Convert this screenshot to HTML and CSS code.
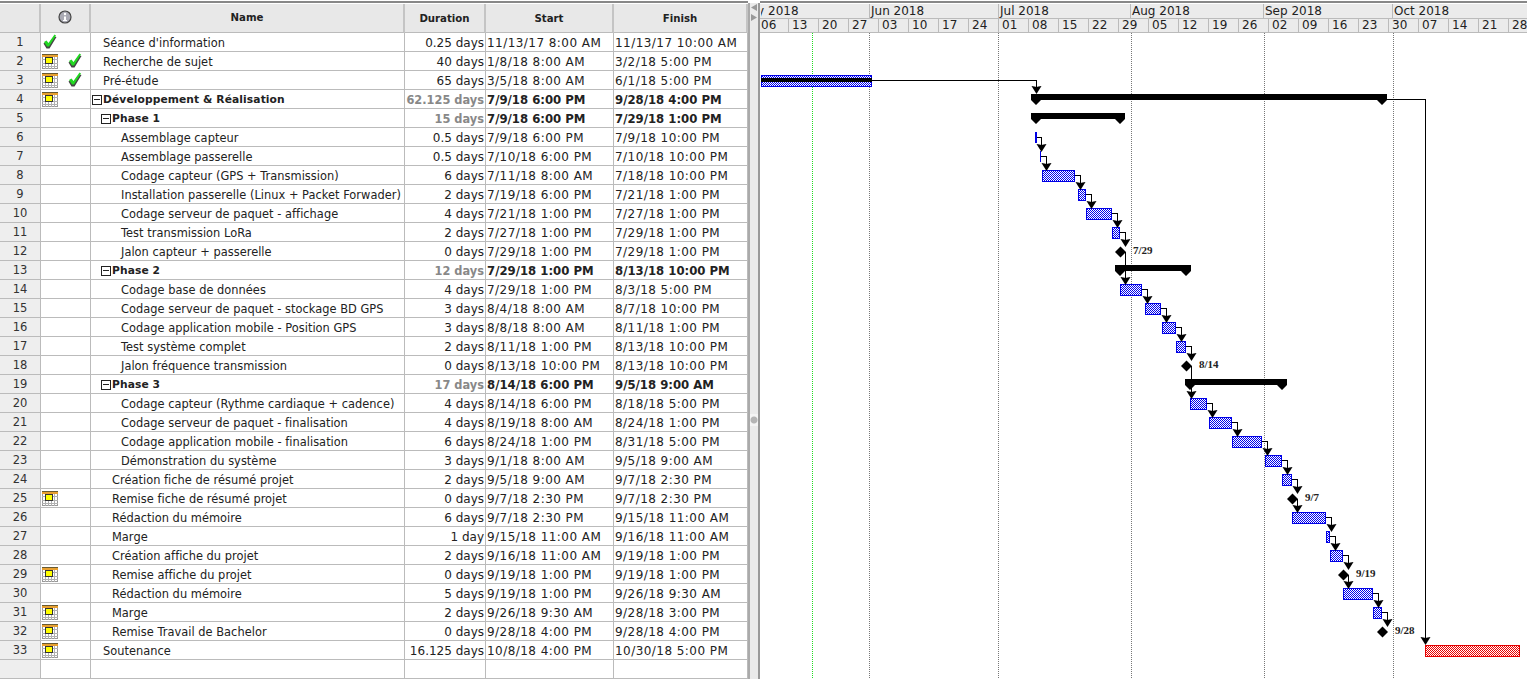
FILE: index.html
```html
<!DOCTYPE html>
<html lang="en">
<head>
<meta charset="utf-8">
<title>Gantt</title>
<link rel="stylesheet" href="styles.css">
</head>
<body>
<svg class="defs" width="0" height="0">
<defs>
<symbol id="cal" viewBox="0 0 16 15"><rect x="0.5" y="0.5" width="15" height="14" fill="#fff" stroke="#999"/><path d="M0 5.5H16M0 9.5H16M0 12.5H16M3.5 0V15M6.5 0V15M9.5 0V15M12.5 0V15" stroke="#b0b0b0" fill="none"/><rect x="0" y="0" width="16" height="1" fill="#6a5a30"/><rect x="0" y="1" width="16" height="2" fill="#e8a030"/><rect x="3.5" y="3.5" width="7" height="6" fill="#ff0" stroke="#333"/></symbol>
<symbol id="chk" viewBox="0 0 14 15"><path d="M0.5 9.5L3 8L5 10.5L11 2.5L13.5 3L6.5 14.5L3.5 14.5Z" fill="#444"/><path d="M1 8L3.5 6.5L5.5 9L11.5 0.5L13 1.5L6 12.5L4 12.5Z" fill="#22d822"/></symbol>
<pattern id="blue" width="2" height="2" patternUnits="userSpaceOnUse"><rect width="2" height="2" fill="#fff"/><rect width="1" height="1" fill="#00e"/><rect x="1" y="1" width="1" height="1" fill="#00e"/></pattern>
<pattern id="red" width="2" height="2" patternUnits="userSpaceOnUse"><rect width="2" height="2" fill="#fff"/><rect width="1" height="1" fill="#e00"/><rect x="1" y="1" width="1" height="1" fill="#e00"/></pattern>
<polygon id="ah" points="0,1 -5,-7 -2,-6.5 0,-6 2,-6.5 5,-7"/>
</defs>
</svg>
<div class="app">
<div class="table">
<div class="row head"><span class="c n"></span><span class="c i"><svg class="info" width="14" height="14" viewBox="0 0 14 14"><circle cx="7" cy="7" r="6" fill="#aaaab4" stroke="#444" stroke-width="1.2"/><circle cx="7" cy="4" r="1.2" fill="#fff"/><path d="M6 6.5H8V10H9V11H5V10H6Z" fill="#fff"/></svg></span><span class="c nm">Name</span><span class="c d">Duration</span><span class="c s">Start</span><span class="c f">Finish</span></div>
<div class="row"><span class="c n">1</span><span class="c i"><svg class="ck1"><use href="#chk"/></svg></span><span class="c nm l0">Séance d'information</span><span class="c d">0.25 days</span><span class="c s">11/13/17 8:00 AM</span><span class="c f">11/13/17 10:00 AM</span></div>
<div class="row"><span class="c n">2</span><span class="c i"><svg class="cal"><use href="#cal"/></svg><svg class="ck2"><use href="#chk"/></svg></span><span class="c nm l0">Recherche de sujet</span><span class="c d">40 days</span><span class="c s">1/8/18 8:00 AM</span><span class="c f">3/2/18 5:00 PM</span></div>
<div class="row"><span class="c n">3</span><span class="c i"><svg class="cal"><use href="#cal"/></svg><svg class="ck2"><use href="#chk"/></svg></span><span class="c nm l0">Pré-étude</span><span class="c d">65 days</span><span class="c s">3/5/18 8:00 AM</span><span class="c f">6/1/18 5:00 PM</span></div>
<div class="row sum"><span class="c n">4</span><span class="c i"><svg class="cal"><use href="#cal"/></svg></span><span class="c nm t0"><i class="box"></i>Développement &amp; Réalisation</span><span class="c d">62.125 days</span><span class="c s">7/9/18 6:00 PM</span><span class="c f">9/28/18 4:00 PM</span></div>
<div class="row sum"><span class="c n">5</span><span class="c i"></span><span class="c nm t1"><i class="box"></i>Phase 1</span><span class="c d">15 days</span><span class="c s">7/9/18 6:00 PM</span><span class="c f">7/29/18 1:00 PM</span></div>
<div class="row"><span class="c n">6</span><span class="c i"></span><span class="c nm l2">Assemblage capteur</span><span class="c d">0.5 days</span><span class="c s">7/9/18 6:00 PM</span><span class="c f">7/9/18 10:00 PM</span></div>
<div class="row"><span class="c n">7</span><span class="c i"></span><span class="c nm l2">Assemblage passerelle</span><span class="c d">0.5 days</span><span class="c s">7/10/18 6:00 PM</span><span class="c f">7/10/18 10:00 PM</span></div>
<div class="row"><span class="c n">8</span><span class="c i"></span><span class="c nm l2">Codage capteur (GPS + Transmission)</span><span class="c d">6 days</span><span class="c s">7/11/18 8:00 AM</span><span class="c f">7/18/18 10:00 PM</span></div>
<div class="row"><span class="c n">9</span><span class="c i"></span><span class="c nm l2">Installation passerelle (Linux + Packet Forwader)</span><span class="c d">2 days</span><span class="c s">7/19/18 6:00 PM</span><span class="c f">7/21/18 1:00 PM</span></div>
<div class="row"><span class="c n">10</span><span class="c i"></span><span class="c nm l2">Codage serveur de paquet - affichage</span><span class="c d">4 days</span><span class="c s">7/21/18 1:00 PM</span><span class="c f">7/27/18 1:00 PM</span></div>
<div class="row"><span class="c n">11</span><span class="c i"></span><span class="c nm l2">Test transmission LoRa</span><span class="c d">2 days</span><span class="c s">7/27/18 1:00 PM</span><span class="c f">7/29/18 1:00 PM</span></div>
<div class="row"><span class="c n">12</span><span class="c i"></span><span class="c nm l2">Jalon capteur + passerelle</span><span class="c d">0 days</span><span class="c s">7/29/18 1:00 PM</span><span class="c f">7/29/18 1:00 PM</span></div>
<div class="row sum"><span class="c n">13</span><span class="c i"></span><span class="c nm t1"><i class="box"></i>Phase 2</span><span class="c d">12 days</span><span class="c s">7/29/18 1:00 PM</span><span class="c f">8/13/18 10:00 PM</span></div>
<div class="row"><span class="c n">14</span><span class="c i"></span><span class="c nm l2">Codage base de données</span><span class="c d">4 days</span><span class="c s">7/29/18 1:00 PM</span><span class="c f">8/3/18 5:00 PM</span></div>
<div class="row"><span class="c n">15</span><span class="c i"></span><span class="c nm l2">Codage serveur de paquet - stockage BD GPS</span><span class="c d">3 days</span><span class="c s">8/4/18 8:00 AM</span><span class="c f">8/7/18 10:00 PM</span></div>
<div class="row"><span class="c n">16</span><span class="c i"></span><span class="c nm l2">Codage application mobile - Position GPS</span><span class="c d">3 days</span><span class="c s">8/8/18 8:00 AM</span><span class="c f">8/11/18 1:00 PM</span></div>
<div class="row"><span class="c n">17</span><span class="c i"></span><span class="c nm l2">Test système complet</span><span class="c d">2 days</span><span class="c s">8/11/18 1:00 PM</span><span class="c f">8/13/18 10:00 PM</span></div>
<div class="row"><span class="c n">18</span><span class="c i"></span><span class="c nm l2">Jalon fréquence transmission</span><span class="c d">0 days</span><span class="c s">8/13/18 10:00 PM</span><span class="c f">8/13/18 10:00 PM</span></div>
<div class="row sum"><span class="c n">19</span><span class="c i"></span><span class="c nm t1"><i class="box"></i>Phase 3</span><span class="c d">17 days</span><span class="c s">8/14/18 6:00 PM</span><span class="c f">9/5/18 9:00 AM</span></div>
<div class="row"><span class="c n">20</span><span class="c i"></span><span class="c nm l2">Codage capteur (Rythme cardiaque + cadence)</span><span class="c d">4 days</span><span class="c s">8/14/18 6:00 PM</span><span class="c f">8/18/18 5:00 PM</span></div>
<div class="row"><span class="c n">21</span><span class="c i"></span><span class="c nm l2">Codage serveur de paquet - finalisation</span><span class="c d">4 days</span><span class="c s">8/19/18 8:00 AM</span><span class="c f">8/24/18 1:00 PM</span></div>
<div class="row"><span class="c n">22</span><span class="c i"></span><span class="c nm l2">Codage application mobile - finalisation</span><span class="c d">6 days</span><span class="c s">8/24/18 1:00 PM</span><span class="c f">8/31/18 5:00 PM</span></div>
<div class="row"><span class="c n">23</span><span class="c i"></span><span class="c nm l2">Démonstration du système</span><span class="c d">3 days</span><span class="c s">9/1/18 8:00 AM</span><span class="c f">9/5/18 9:00 AM</span></div>
<div class="row"><span class="c n">24</span><span class="c i"></span><span class="c nm l1">Création fiche de résumé projet</span><span class="c d">2 days</span><span class="c s">9/5/18 9:00 AM</span><span class="c f">9/7/18 2:30 PM</span></div>
<div class="row"><span class="c n">25</span><span class="c i"><svg class="cal"><use href="#cal"/></svg></span><span class="c nm l1">Remise fiche de résumé projet</span><span class="c d">0 days</span><span class="c s">9/7/18 2:30 PM</span><span class="c f">9/7/18 2:30 PM</span></div>
<div class="row"><span class="c n">26</span><span class="c i"></span><span class="c nm l1">Rédaction du mémoire</span><span class="c d">6 days</span><span class="c s">9/7/18 2:30 PM</span><span class="c f">9/15/18 11:00 AM</span></div>
<div class="row"><span class="c n">27</span><span class="c i"></span><span class="c nm l1">Marge</span><span class="c d">1 day</span><span class="c s">9/15/18 11:00 AM</span><span class="c f">9/16/18 11:00 AM</span></div>
<div class="row"><span class="c n">28</span><span class="c i"></span><span class="c nm l1">Création affiche du projet</span><span class="c d">2 days</span><span class="c s">9/16/18 11:00 AM</span><span class="c f">9/19/18 1:00 PM</span></div>
<div class="row"><span class="c n">29</span><span class="c i"><svg class="cal"><use href="#cal"/></svg></span><span class="c nm l1">Remise affiche du projet</span><span class="c d">0 days</span><span class="c s">9/19/18 1:00 PM</span><span class="c f">9/19/18 1:00 PM</span></div>
<div class="row"><span class="c n">30</span><span class="c i"></span><span class="c nm l1">Rédaction du mémoire</span><span class="c d">5 days</span><span class="c s">9/19/18 1:00 PM</span><span class="c f">9/26/18 9:30 AM</span></div>
<div class="row"><span class="c n">31</span><span class="c i"><svg class="cal"><use href="#cal"/></svg></span><span class="c nm l1">Marge</span><span class="c d">2 days</span><span class="c s">9/26/18 9:30 AM</span><span class="c f">9/28/18 3:00 PM</span></div>
<div class="row"><span class="c n">32</span><span class="c i"><svg class="cal"><use href="#cal"/></svg></span><span class="c nm l1">Remise Travail de Bachelor</span><span class="c d">0 days</span><span class="c s">9/28/18 4:00 PM</span><span class="c f">9/28/18 4:00 PM</span></div>
<div class="row"><span class="c n">33</span><span class="c i"><svg class="cal"><use href="#cal"/></svg></span><span class="c nm l0">Soutenance</span><span class="c d">16.125 days</span><span class="c s">10/8/18 4:00 PM</span><span class="c f">10/30/18 5:00 PM</span></div>
<div class="row"><span class="c n"></span><span class="c i"></span><span class="c nm"></span><span class="c d"></span><span class="c s"></span><span class="c f"></span></div>
</div>
<div class="split">
<svg class="tri" width="8" height="18" viewBox="0 0 8 18"><path d="M7 1V8L1 4.5ZM1 11V18L7 14.5Z" fill="#999"/></svg>
<i class="knob"></i>
</div>
<div class="chart">
<div class="months"><span class="mo may"><b>May 2018</b></span><span class="mo jun">Jun 2018</span><span class="mo jul">Jul 2018</span><span class="mo aug">Aug 2018</span><span class="mo sep">Sep 2018</span><span class="mo oct">Oct 2018</span></div>
<div class="days"><span class="first">06</span><span>13</span><span>20</span><span>27</span><span>03</span><span>10</span><span>17</span><span>24</span><span>01</span><span>08</span><span>15</span><span>22</span><span>29</span><span>05</span><span>12</span><span>19</span><span>26</span><span>02</span><span>09</span><span>16</span><span>23</span><span>30</span><span>07</span><span>14</span><span>21</span><span>28</span></div>
<svg class="gantt" width="767" height="646" viewBox="760 33 767 646">
<g class="grid"><path class="today" d="M812.5 33V679"/><path d="M869.5 33V679M998.5 33V679M1131.5 33V679M1264.5 33V679M1393.5 33V679"/></g>
<g class="bars">
<rect x="761.5" y="75.5" width="110" height="11"/>
<rect class="prog" x="761" y="78" width="111" height="4"/>
<rect class="thin" x="1035" y="132" width="2" height="11"/>
<rect class="thin" x="1040" y="151" width="1" height="11"/>
<rect x="1042.5" y="170.5" width="32" height="11"/>
<rect x="1078.5" y="189.5" width="7" height="11"/>
<rect x="1086.5" y="208.5" width="25" height="11"/>
<rect x="1112.5" y="227.5" width="7" height="11"/>
<rect x="1120.5" y="284.5" width="21" height="11"/>
<rect x="1145.5" y="303.5" width="15" height="11"/>
<rect x="1162.5" y="322.5" width="13" height="11"/>
<rect x="1176.5" y="341.5" width="9" height="11"/>
<rect x="1190.5" y="398.5" width="16" height="11"/>
<rect x="1209.5" y="417.5" width="22" height="11"/>
<rect x="1232.5" y="436.5" width="29" height="11"/>
<rect x="1265.5" y="455.5" width="16" height="11"/>
<rect x="1282.5" y="474.5" width="9" height="11"/>
<rect x="1292.5" y="512.5" width="33" height="11"/>
<rect x="1326.5" y="531.5" width="3" height="11"/>
<rect x="1330.5" y="550.5" width="12" height="11"/>
<rect x="1343.5" y="588.5" width="29" height="11"/>
<rect x="1373.5" y="607.5" width="8" height="11"/>
<rect class="crit" x="1425.5" y="645.5" width="94" height="11"/>
</g>
<g class="solid">
<polygon points="1031,94 1387,94 1387,100 1382,105 1377,100 1041,100 1036,105 1031,100"/>
<polygon points="1031,113 1125,113 1125,119 1120,124 1115,119 1041,119 1036,124 1031,119"/>
<polygon points="1115,265 1191,265 1191,271 1186,276 1181,271 1125,271 1120,276 1115,271"/>
<polygon points="1185,379 1287,379 1287,385 1282,390 1277,385 1195,385 1190,390 1185,385"/>
<polygon points="1120.5,246.5 1126,252 1120.5,257.5 1115,252"/>
<polygon points="1186.5,360.5 1192,366 1186.5,371.5 1181,366"/>
<polygon points="1292.5,493.5 1298,499 1292.5,504.5 1287,499"/>
<polygon points="1343.5,569.5 1349,575 1343.5,580.5 1338,575"/>
<polygon points="1382.5,626.5 1388,632 1382.5,637.5 1377,632"/>
</g>
<path class="links" d="M872 80.5H1036.5V90M1387 99.5H1425.5V640M1037 137.5H1041.5V148M1041 156.5H1046.5V167M1075 175.5H1080.5V186M1086 194.5H1091.5V205M1112 213.5H1117.5V224M1120 232.5H1125.5V243M1125 252.5H1125.5V280M1142 289.5H1147.5V300M1161 308.5H1166.5V319M1176 327.5H1181.5V338M1186 346.5H1191.5V357M1191 366.5H1191.5V394M1207 403.5H1212.5V414M1232 422.5H1237.5V433M1262 441.5H1267.5V452M1282 460.5H1287.5V471M1292 479.5H1297.5V490M1297 499.5H1297.5V509M1326 517.5H1331.5V528M1330 536.5H1335.5V547M1343 555.5H1348.5V566M1348 575.5H1348.5V585M1373 593.5H1378.5V604M1382 612.5H1387.5V623"/>
<g class="solid">
<use href="#ah" x="1036.5" y="93"/><use href="#ah" x="1425.5" y="644"/><use href="#ah" x="1041.5" y="151"/><use href="#ah" x="1046.5" y="170"/><use href="#ah" x="1080.5" y="189"/><use href="#ah" x="1091.5" y="208"/><use href="#ah" x="1117.5" y="227"/><use href="#ah" x="1125.5" y="246"/><use href="#ah" x="1125.5" y="284"/><use href="#ah" x="1147.5" y="303"/><use href="#ah" x="1166.5" y="322"/><use href="#ah" x="1181.5" y="341"/><use href="#ah" x="1191.5" y="360"/><use href="#ah" x="1191.5" y="398"/><use href="#ah" x="1212.5" y="417"/><use href="#ah" x="1237.5" y="436"/><use href="#ah" x="1267.5" y="455"/><use href="#ah" x="1287.5" y="474"/><use href="#ah" x="1297.5" y="493"/><use href="#ah" x="1297.5" y="512"/><use href="#ah" x="1331.5" y="531"/><use href="#ah" x="1335.5" y="550"/><use href="#ah" x="1348.5" y="569"/><use href="#ah" x="1348.5" y="588"/><use href="#ah" x="1378.5" y="607"/><use href="#ah" x="1387.5" y="626"/>
</g>
<g class="labels"><text x="1133" y="254">7/29</text><text x="1199" y="368">8/14</text><text x="1305" y="501">9/7</text><text x="1356" y="577">9/19</text><text x="1395" y="634">9/28</text></g>
</svg>
</div>
</div>
</body>
</html>
```

FILE: styles.css
```css
html, body { margin: 0; padding: 0; height: 679px; overflow: hidden; background: #fff; }
.defs { position: absolute; }
.app { display: flex; height: 679px; padding-top: 1px; box-sizing: border-box; font-family: "DejaVu Sans", sans-serif; color: #222; overflow: hidden; }
.table { width: 748px; flex: none; border-top: 2px solid #888; padding-top: 1px; }
.row { display: grid; grid-template-columns: 41px 50px 314px 81px 128px 134px; height: 19px; font-size: 12px; line-height: 18px; }
.c { display: block; box-sizing: border-box; height: 19px; border-right: 1px solid #bbb; border-bottom: 1px solid #bbb; white-space: nowrap; overflow: hidden; }
.n { background: #eee; text-align: center; font-size: 11.5px; color: #333; }
.i { position: relative; }
.nm { display: flex; align-items: center; font-size: 11.4px; letter-spacing: 0.03px; padding-top: 1px; }
.d { text-align: right; padding-right: 1px; line-height: 20px; }
.s { padding-left: 1px; line-height: 20px; letter-spacing: 0.45px; }
.f { padding-left: 1px; line-height: 20px; letter-spacing: 0.45px; }
.l0 { padding-left: 12px; }
.l1 { padding-left: 21px; }
.l2 { padding-left: 30px; }
.t0 { padding-left: 1px; }
.t1 { padding-left: 10px; }
.box { display: block; flex: none; width: 8px; height: 8px; margin-right: 1px; border: 1px solid #222; background: linear-gradient(#222, #222) center / 6px 1px no-repeat; }
.sum { font-weight: bold; }
.sum .nm { font-size: 10.7px; letter-spacing: 0.1px; }
.sum .d { color: #888; font-size: 11.4px; }
.sum .s, .sum .f { font-size: 11.7px; letter-spacing: 0; }
.sum .n { font-weight: normal; }
.head { height: 29px; font-weight: bold; font-size: 10.2px; line-height: 30px; }
.head .c { height: 29px; background: #e8e8e8; text-align: center; border-right: 2px solid #c4c4c4; padding: 0; justify-content: center; font-size: 10.2px; line-height: 30px; letter-spacing: 0; }
.info { display: block; margin: 6px auto 0; }
.cal { position: absolute; left: 1px; top: 2px; width: 16px; height: 15px; }
.ck1 { position: absolute; left: 2px; top: 1px; width: 14px; height: 15px; }
.ck2 { position: absolute; left: 27px; top: 1px; width: 14px; height: 15px; }
.split { width: 12px; flex: none; box-sizing: border-box; background: #eaeaea; border-left: 2px solid #aaa; border-right: 2px solid #999; position: relative; margin-top: 2px; }
.tri { display: block; margin-left: 0; }
.knob { position: absolute; left: 0; right: 0; top: 411px; height: 12px; background: radial-gradient(circle at center, #b4b4b4 3px, #f4f4f4 4px); }
.chart { flex: 1; min-width: 0; display: flex; flex-direction: column; border-top: 2px solid #888; }
.months { display: flex; height: 15px; margin-top: 1px; box-sizing: border-box; background: #ebebeb; border-bottom: 1px solid #bbb; font-size: 12px; line-height: 14px; overflow: hidden; }
.mo { flex: none; box-sizing: border-box; border-right: 1px solid #bbb; padding-left: 1px; white-space: nowrap; overflow: hidden; }
.mo b { font-weight: normal; display: block; margin-left: -22.6px; }
.may { width: 110px; border-left: 1px solid #ebebeb; }
.jun { width: 129px; }
.jul { width: 132px; }
.aug { width: 133px; }
.sep { width: 129px; }
.oct { flex: 1; border-right: 0; }
.days { display: flex; height: 14px; box-sizing: border-box; background: #ebebeb; border-bottom: 1px solid #bbb; font-size: 12px; line-height: 13px; overflow: hidden; }
.days span { flex: none; width: 30px; box-sizing: border-box; border-right: 1px solid #bbb; padding-left: 3px; }
.days .first { width: 29px; padding-left: 1px; }
.gantt { display: block; flex: none; }
.grid path { stroke: #777; stroke-dasharray: 1 1; fill: none; shape-rendering: crispEdges; }
.grid .today { stroke: #22dd22; }
.bars rect { fill: url(#blue); stroke: #0000e6; shape-rendering: crispEdges; }
.bars .prog { fill: #000; stroke: none; }
.bars .thin { fill: #0000e6; stroke: none; }
.bars .crit { fill: url(#red); stroke: #e60000; }
.solid { fill: #000; }
.links { fill: none; stroke: #000; stroke-width: 1; shape-rendering: crispEdges; }
.labels text { font-family: "Liberation Serif", serif; font-weight: bold; font-size: 11px; fill: #222; }
```
